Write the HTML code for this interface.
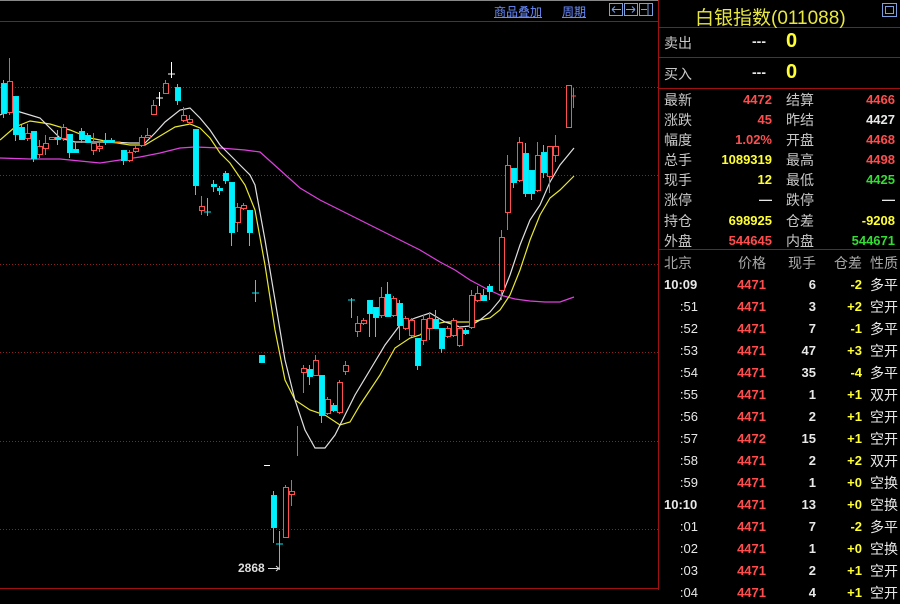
<!DOCTYPE html>
<html><head><meta charset="utf-8"><style>
*{margin:0;padding:0}
body{width:900px;height:590px;background:#000;overflow:hidden;position:relative;font-family:"Liberation Sans","Noto Sans CJK SC",sans-serif}
.a{position:absolute;white-space:nowrap}
.l{color:#c8c8c8;font-size:14px}
.v{font-size:13px;font-weight:bold;text-align:right}
.r{color:#ff4d4d}.y{color:#ffff33}.w{color:#e8e8e8}.g{color:#33dd33}
</style></head><body>
<svg width="900" height="590" style="position:absolute;left:0;top:0">
<line x1="0" y1="0.5" x2="658" y2="0.5" stroke="#888"/>
<line x1="0" y1="21.5" x2="658" y2="21.5" stroke="#a01010"/>
<line x1="658.5" y1="0" x2="658.5" y2="590" stroke="#a01010"/>
<line x1="0" y1="588.5" x2="658" y2="588.5" stroke="#a01010"/>
<g stroke="#902020" stroke-dasharray="1,2">
<line x1="0" y1="87.5" x2="658" y2="87.5"/><line x1="0" y1="175.5" x2="658" y2="175.5"/>
<line x1="0" y1="264.5" x2="658" y2="264.5"/><line x1="0" y1="352.5" x2="658" y2="352.5"/>
<line x1="0" y1="441.5" x2="658" y2="441.5"/><line x1="0" y1="529.5" x2="658" y2="529.5"/>
</g>
<g fill="none" stroke="#7aa0e0">
<rect x="609.5" y="3.5" width="13" height="12"/><rect x="624.5" y="3.5" width="13" height="12"/><rect x="639.5" y="3.5" width="13" height="12"/>
<path d="M612 9.5h9M612 9.5l3-3M612 9.5l3 3M635 9.5h-9M635 9.5l-3-3M635 9.5l-3 3M648 4v11M641 9.5h6"/>
</g>
<line x1="658" y1="27.5" x2="900" y2="27.5" stroke="#a01010"/>
<line x1="658" y1="57.5" x2="900" y2="57.5" stroke="#a01010"/>
<line x1="658" y1="88.5" x2="900" y2="88.5" stroke="#a01010"/>
<line x1="658" y1="249.5" x2="900" y2="249.5" stroke="#a01010"/>
<rect x="882.5" y="3.5" width="14" height="13" fill="none" stroke="#7aa0e0"/>
<rect x="885.5" y="6.5" width="8" height="7" fill="none" stroke="#7aa0e0"/>
<!-- MAs -->
<polyline fill="none" stroke="#e040e0" stroke-width="1.2" points="0,158 30,159 60,159 80,161 100,163 120,160 140,157 160,153 180,148 195,147 220,148 245,150 260,152 280,170 300,188 320,200 340,210 360,220 380,230 400,240 420,250 440,262 455,270 470,280 485,288 500,295 515,299 530,301 545,302 560,302 574,297"/>
<polyline fill="none" stroke="#e8e830" stroke-width="1.2" points="0,140 15,127 30,121 50,124 70,130 90,138 110,142 130,145 145,145 160,136 175,127 190,124 200,128 210,138 220,153 230,163 245,185 255,210 265,265 275,330 285,380 295,400 310,410 325,415 340,425 350,422 360,405 370,390 380,375 395,348 410,338 420,335 430,325 445,322 460,322 470,322 480,320 490,318 500,310 510,295 520,270 530,240 540,215 550,198 560,190 574,176"/>
<polyline fill="none" stroke="#e0e0e0" stroke-width="1.2" points="0,115 10,110 20,112 40,118 50,128 60,138 75,142 90,142 110,142 130,143 145,143 155,133 165,122 180,110 190,108 200,118 210,130 220,145 230,155 240,165 250,175 255,185 265,240 275,300 285,360 295,400 305,430 315,448 325,448 335,435 345,415 355,395 370,370 385,345 400,325 415,318 430,313 445,322 460,327 470,326 480,320 490,312 500,300 510,275 520,245 530,220 540,205 550,182 560,165 574,148"/>
<!-- red candles -->
<g stroke="#ff5050" fill="#000" stroke-width="1">
<path d="M9.5 58V115M27.5 124V141M39.5 140V158M45.5 135V155M63.5 124V141M93.5 133V155M99.5 143V152M129.5 150V162M135.5 146V153M141.5 135V147M147.5 128V138M153.5 100V114M165.5 80V94M183.5 107V122M189.5 115V125M201.5 196V215M237.5 203V232M243.5 203V210M285.5 485V537M291.5 480V506M297.5 426V456M303.5 365V393M315.5 355V375M327.5 397V415M339.5 380V414M345.5 361V375M357.5 316V337M363.5 318V325M381.5 287V318M393.5 296V317M405.5 316V330M411.5 318V337M423.5 315V345M429.5 312V340M447.5 326V338M453.5 318V337M459.5 326V347M471.5 290V329M477.5 286V302M501.5 230V300M507.5 155V230M519.5 137V182M537.5 142V192M549.5 146V193M555.5 135V162M569.5 85V127M573.5 88V108M570 96H576"/>
<rect x="7.5" y="81.5" width="5" height="31"/><rect x="25.5" y="133.5" width="5" height="5"/><rect x="37.5" y="146.5" width="5" height="8"/><rect x="43.5" y="143.5" width="5" height="5"/><rect x="49.5" y="137.5" width="5" height="2"/><rect x="61.5" y="127.5" width="5" height="11"/><rect x="91.5" y="143.5" width="5" height="7"/><rect x="97.5" y="146.5" width="5" height="2"/><rect x="127.5" y="152.5" width="5" height="8"/><rect x="133.5" y="148.5" width="5" height="3"/><rect x="139.5" y="137.5" width="5" height="8"/><rect x="145.5" y="135.5" width="5" height="2"/><rect x="151.5" y="105.5" width="5" height="9"/><rect x="163.5" y="83.5" width="5" height="10"/><rect x="181.5" y="115.5" width="5" height="5"/><rect x="187.5" y="119.5" width="5" height="3"/><rect x="199.5" y="206.5" width="5" height="4"/><rect x="235.5" y="207.5" width="5" height="15"/><rect x="241.5" y="205.5" width="5" height="3"/><rect x="283.5" y="487.5" width="5" height="50"/><rect x="289.5" y="491.5" width="5" height="3"/><rect x="301.5" y="368.5" width="5" height="4"/><rect x="313.5" y="360.5" width="5" height="15"/><rect x="325.5" y="399.5" width="5" height="14"/><rect x="337.5" y="382.5" width="5" height="30"/><rect x="343.5" y="365.5" width="5" height="6"/><rect x="355.5" y="323.5" width="5" height="8"/><rect x="361.5" y="320.5" width="5" height="3"/><rect x="379.5" y="297.5" width="5" height="18"/><rect x="391.5" y="298.5" width="5" height="17"/><rect x="403.5" y="318.5" width="5" height="10"/><rect x="409.5" y="320.5" width="5" height="15"/><rect x="421.5" y="319.5" width="5" height="21"/><rect x="427.5" y="318.5" width="5" height="10"/><rect x="445.5" y="328.5" width="5" height="8"/><rect x="451.5" y="320.5" width="5" height="15"/><rect x="457.5" y="328.5" width="5" height="17"/><rect x="469.5" y="295.5" width="5" height="32"/><rect x="475.5" y="293.5" width="5" height="7"/><rect x="499.5" y="237.5" width="5" height="53"/><rect x="505.5" y="165.5" width="5" height="47"/><rect x="517.5" y="142.5" width="5" height="38"/><rect x="535.5" y="155.5" width="5" height="35"/><rect x="547.5" y="146.5" width="5" height="30"/><rect x="553.5" y="146.5" width="5" height="9"/><rect x="566.5" y="85.5" width="5" height="42"/>
</g>
<!-- cyan candles -->
<g stroke="#00e8f0" fill="#00f0ff" stroke-width="1">
<path d="M3.5 80V118M15.5 96V141M21.5 125V140M33.5 131V162M57.5 130V145M69.5 134V158M75.5 143V152M81.5 128V143M87.5 133V143M105.5 133V145M111.5 138V143M123.5 150V165M177.5 84V105M195.5 129V195M207.5 198V216M204 212H211M213.5 180V192M219.5 186V195M225.5 171V184M231.5 182V246M249.5 210V246M255.5 280V302M252 293H259M273.5 491V543M279.5 531V570M276 544H283M309.5 365V385M321.5 375V423M333.5 403V412M351.5 298V318M348 300H355M369.5 300V337M375.5 307V337M387.5 282V316M399.5 300V340M417.5 338V370M435.5 310V328M441.5 328V353M465.5 328V335M483.5 289V300M489.5 284V300M513.5 168V188M525.5 143V197M531.5 170V200M543.5 145V178"/>
<rect x="1.5" y="83.5" width="5" height="30"/><rect x="13.5" y="96.5" width="5" height="38"/><rect x="19.5" y="127.5" width="5" height="12"/><rect x="31.5" y="131.5" width="5" height="27"/><rect x="55.5" y="137.5" width="5" height="2"/><rect x="67.5" y="134.5" width="5" height="18"/><rect x="73.5" y="149.5" width="5" height="3"/><rect x="79.5" y="131.5" width="5" height="8"/><rect x="85.5" y="135.5" width="5" height="7"/><rect x="103.5" y="140.5" width="5" height="2"/><rect x="109.5" y="140.5" width="5" height="2"/><rect x="121.5" y="150.5" width="5" height="10"/><rect x="175.5" y="87.5" width="5" height="13"/><rect x="193.5" y="129.5" width="5" height="56"/><rect x="211.5" y="184.5" width="5" height="2"/><rect x="217.5" y="188.5" width="5" height="2"/><rect x="223.5" y="173.5" width="5" height="7"/><rect x="229.5" y="182.5" width="5" height="50"/><rect x="247.5" y="210.5" width="5" height="22"/><rect x="259.5" y="355.5" width="5" height="7"/><rect x="271.5" y="495.5" width="5" height="32"/><rect x="307.5" y="369.5" width="5" height="7"/><rect x="319.5" y="375.5" width="5" height="40"/><rect x="331.5" y="405.5" width="5" height="5"/><rect x="367.5" y="300.5" width="5" height="13"/><rect x="373.5" y="307.5" width="5" height="10"/><rect x="385.5" y="294.5" width="5" height="22"/><rect x="397.5" y="303.5" width="5" height="22"/><rect x="415.5" y="338.5" width="5" height="27"/><rect x="433.5" y="319.5" width="5" height="9"/><rect x="439.5" y="328.5" width="5" height="20"/><rect x="463.5" y="330.5" width="5" height="3"/><rect x="481.5" y="295.5" width="5" height="5"/><rect x="487.5" y="286.5" width="5" height="5"/><rect x="511.5" y="168.5" width="5" height="14"/><rect x="523.5" y="153.5" width="5" height="40"/><rect x="529.5" y="170.5" width="5" height="23"/><rect x="541.5" y="152.5" width="5" height="20"/>
</g>
<g stroke="#fff"><path d="M159.5 92V106M156 98H163M171.5 62V78M168 74H175M264 465.5H270"/></g>
<rect x="114.5" y="141.5" width="6" height="2" fill="#ff9000"/>
<path d="M268 568.5H279M276 566l3 2.5-3 2.5" stroke="#ddd" fill="none"/>
</svg>
<div class="a" style="left:238px;top:561px;color:#ddd;font-size:12px;font-weight:bold">2868</div>
<div class="a" style="left:494px;top:3px;color:#6a8cff;font-size:12px;text-decoration:underline">商品叠加</div>
<div class="a" style="left:562px;top:3px;color:#6a8cff;font-size:12px;text-decoration:underline">周期</div>
<div class="a" style="left:695px;top:3px;color:#e8e840;font-size:19px">白银指数(011088)</div>
<div class="a l" style="left:664px;top:33px">卖出</div><div class="a w" style="left:752px;top:33px;font-weight:bold;font-size:14px">---</div><div class="a y" style="left:786px;top:30px;font-weight:bold;font-size:20px">0</div>
<div class="a l" style="left:664px;top:64px">买入</div><div class="a w" style="left:752px;top:64px;font-weight:bold;font-size:14px">---</div><div class="a y" style="left:786px;top:61px;font-weight:bold;font-size:20px">0</div>
<div class="a" style="left:662px;top:90px;width:236px;line-height:20.1px">
<div style="position:relative;height:161px">
<div class="a l" style="left:2px;top:0;line-height:20.1px">最新<br>涨跌<br>幅度<br>总手<br>现手<br>涨停<br>持仓<br>外盘</div>
<div class="a l" style="left:124px;top:0;line-height:20.1px">结算<br>昨结<br>开盘<br>最高<br>最低<br>跌停<br>仓差<br>内盘</div>
<div class="a v" style="right:126px;top:0;line-height:20.1px"><span class="r">4472</span><br><span class="r">45</span><br><span class="r">1.02%</span><br><span class="y">1089319</span><br><span class="y">12</span><br><span class="w">—</span><br><span class="y">698925</span><br><span class="r">544645</span></div>
<div class="a v" style="right:3px;top:0;line-height:20.1px"><span class="r">4466</span><br><span class="w">4427</span><br><span class="r">4468</span><br><span class="r">4498</span><br><span class="g">4425</span><br><span class="w">—</span><br><span class="y">-9208</span><br><span class="g">544671</span></div>
</div></div>
<div class="a" style="left:662px;top:252px;width:238px;font-size:13px;line-height:22px">
<div style="position:relative">
<div class="a" style="left:2px;top:0;color:#aaa;font-size:14px">北京</div>
<div class="a" style="right:134px;top:0;color:#aaa;font-size:14px">价格</div>
<div class="a" style="right:84px;top:0;color:#aaa;font-size:14px">现手</div>
<div class="a" style="right:38px;top:0;color:#aaa;font-size:14px">仓差</div>
<div class="a" style="left:208px;top:0;color:#aaa;font-size:14px">性质</div>
<div class="a w" style="left:2px;top:22px;font-weight:bold;text-align:right;width:34px"><b style="position:absolute;left:0">10:09</b><br><span style="font-weight:normal">:51<br>:52<br>:53<br>:54<br>:55<br>:56<br>:57<br>:58<br>:59</span><br><b style="position:absolute;left:0">10:10</b><br><span style="font-weight:normal">:01<br>:02<br>:03<br>:04</span></div>
<div class="a v r" style="right:134px;top:22px;line-height:22px">4471<br>4471<br>4471<br>4471<br>4471<br>4471<br>4471<br>4472<br>4471<br>4471<br>4471<br>4471<br>4471<br>4471<br>4471</div>
<div class="a v w" style="right:84px;top:22px;line-height:22px">6<br>3<br>7<br>47<br>35<br>1<br>2<br>15<br>2<br>1<br>13<br>7<br>1<br>2<br>4</div>
<div class="a v y" style="right:38px;top:22px;line-height:22px">-2<br>+2<br>-1<br>+3<br>-4<br>+1<br>+1<br>+1<br>+2<br>+0<br>+0<br>-2<br>+0<br>+1<br>+1</div>
<div class="a w" style="left:208px;top:22px;line-height:22px;font-size:14px">多平<br>空开<br>多平<br>空开<br>多平<br>双开<br>空开<br>空开<br>双开<br>空换<br>空换<br>多平<br>空换<br>空开<br>空开</div>
</div></div>
</body></html>
